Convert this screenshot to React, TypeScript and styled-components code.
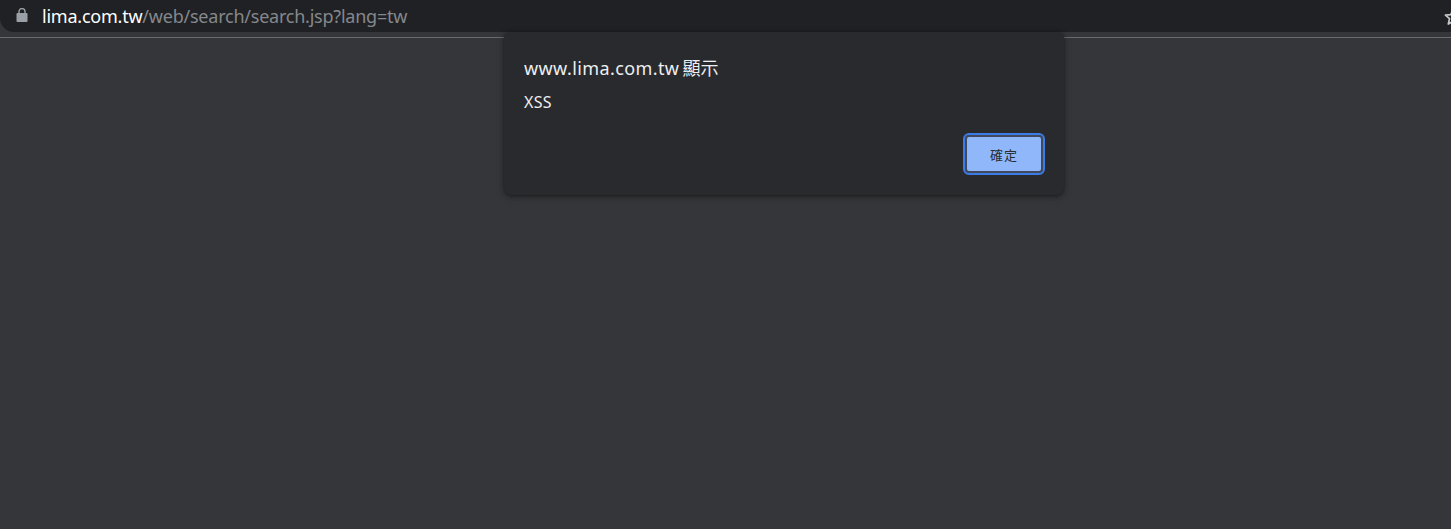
import styled, { createGlobalStyle } from 'styled-components';

const GlobalStyle = createGlobalStyle`
  html, body {
    margin: 0;
    padding: 0;
    height: 100%;
    background: #35363a;
    overflow: hidden;
  }
`;

const uiFont = `'Noto Sans', 'Noto Sans CJK TC', sans-serif`;

function LockIcon() {
  return (
    <svg width="12" height="14" viewBox="0 0 12 14" fill="#9aa0a6">
      <path d="M1.5 5h9a1 1 0 0 1 1 1v7a1 1 0 0 1-1 1h-9a1 1 0 0 1-1-1V6a1 1 0 0 1 1-1z" />
      <path d="M3 6V3.6a3 3 0 0 1 6 0V6" fill="none" stroke="#9aa0a6" strokeWidth="1.4" />
    </svg>
  );
}

function StarIcon() {
  return (
    <svg width="20" height="20" viewBox="0 0 20 20" fill="none">
      <path
        d="M10 2.6l2.2 5 5.4.5-4.1 3.6 1.2 5.3L10 14.2 5.3 17l1.2-5.3-4.1-3.6 5.4-.5z"
        stroke="#c4c7c9"
        strokeWidth="1.7"
        strokeLinejoin="round"
      />
    </svg>
  );
}

export default function App() {
  return (
    <Page>
      <GlobalStyle />
      <Toolbar>
        <AddressBar>
          <LockSlot>
            <LockIcon />
          </LockSlot>
          <Url>
            <Host>lima.com.tw</Host>/web/search/search.jsp?lang=tw
          </Url>
          <StarSlot>
            <StarIcon />
          </StarSlot>
        </AddressBar>
      </Toolbar>
      <Dialog role="alertdialog">
        <DialogTitle>
          www.lima.com.tw <TitleSuffix>顯示</TitleSuffix>
        </DialogTitle>
        <DialogMessage>XSS</DialogMessage>
        <DialogActions>
          <OkButton>確定</OkButton>
        </DialogActions>
      </Dialog>
    </Page>
  );
}

const Page = styled.div`
  position: relative;
  width: 1451px;
  height: 529px;
  overflow: hidden;
  background: #35363a;
  font-family: ${uiFont};
`;

const Toolbar = styled.div`
  height: 37px;
  border-bottom: 1px solid #696b6e;
`;

const AddressBar = styled.div`
  height: 32px;
  display: flex;
  align-items: center;
  background: #202124;
  border-radius: 0 0 0 14px;
`;

const LockSlot = styled.div`
  width: 42px;
  padding: 0 0 2px 16px;
  box-sizing: border-box;
  display: flex;
  align-items: center;
`;

const Url = styled.div`
  flex: 1;
  font-size: 18px;
  letter-spacing: -0.23px;
  color: #85888c;
  white-space: nowrap;
`;

const Host = styled.span`
  color: #ffffff;
`;

const StarSlot = styled.div`
  width: 8px;
  height: 20px;
  margin-top: 1px;
  overflow: hidden;
`;

const Dialog = styled.div`
  position: absolute;
  top: 32px;
  left: 504px;
  width: 560px;
  height: 163px;
  padding: 26px 21px 22px 20px;
  box-sizing: border-box;
  display: flex;
  flex-direction: column;
  background: #292a2d;
  border-radius: 6px 6px 8px 8px;
  box-shadow: 0 1px 4px rgba(0, 0, 0, 0.4), 0 2px 8px rgba(0, 0, 0, 0.2);
`;

const DialogTitle = styled.div`
  font-size: 18px;
  line-height: 20px;
  letter-spacing: 0.4px;
  color: #edeff2;
`;

const TitleSuffix = styled.span`
  margin-left: -2px;
  letter-spacing: 0;
`;

const DialogMessage = styled.div`
  margin-top: 13px;
  font-size: 16px;
  line-height: 22px;
  letter-spacing: 0.3px;
  color: #edeff2;
`;

const DialogActions = styled.div`
  margin-top: auto;
  display: flex;
  justify-content: flex-end;
`;

const OkButton = styled.button`
  width: 78px;
  height: 38px;
  padding: 0;
  box-sizing: border-box;
  border: 2px solid #414a5c;
  border-radius: 4px;
  outline: 2px solid #3b7de8;
  outline-offset: 0;
  background: #8fb7f9;
  color: #2a2c30;
  font-family: ${uiFont};
  font-size: 13px;
  letter-spacing: 1px;
`;
